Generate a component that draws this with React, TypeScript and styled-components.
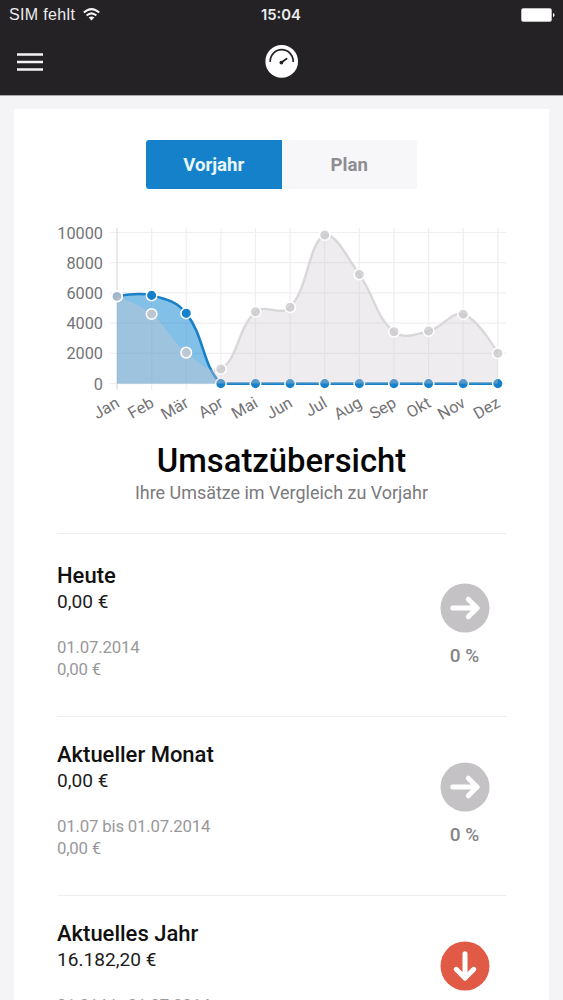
import React from "react";
import styled, { createGlobalStyle } from "styled-components";

const GlobalStyle = createGlobalStyle`
  *, *::before, *::after { box-sizing: border-box; }
  html, body { margin: 0; padding: 0; height: 1000px; overflow: hidden; background: #f4f3f6; }
  body { font-family: Roboto, "Liberation Sans", sans-serif; }
`;

const Screen = styled.div`
  width: 563px;
  height: 1000px;
  overflow: hidden;
  display: flex;
  flex-direction: column;
  background: #f4f3f6;
`;

const Header = styled.header`
  flex: none;
  height: 96px;
  background: #242225;
  border-bottom: 1px solid #a9a8ab;
  color: #fff;
`;

const StatusBar = styled.div`
  height: 29px;
  padding: 0 8px 0 9px;
  display: grid;
  grid-template-columns: 1fr auto 1fr;
  align-items: center;
  font-family: "Liberation Sans", sans-serif;
  font-size: 16px;
  line-height: 29px;
  color: #ececee;
`;

const Carrier = styled.div`
  display: flex;
  align-items: center;
  gap: 8px;
  letter-spacing: 0.35px;
`;

const Clock = styled.div`
  font-family: Inter, sans-serif;
  font-size: 14.8px;
  line-height: 27px;
  padding-top: 2px;
  font-weight: 600;
  margin-right: 2px;
`;

const BatteryIcon = styled.svg`
  justify-self: end;
  display: block;
`;

const NavBar = styled.nav`
  height: 66px;
  padding: 0 17px;
  display: grid;
  grid-template-columns: 1fr auto 1fr;
  align-items: center;
`;

const MenuButton = styled.button`
  width: 26px;
  height: 18px;
  padding: 0;
  border: 0;
  background: none;

  svg { display: block; }
`;

const Card = styled.main`
  flex: none;
  width: 535px;
  height: 960px;
  margin: 13px 14px 0;
  padding: 31px 43px 0;
  background: #fff;
`;

const Tabs = styled.div`
  margin: 0 auto;
  display: flex;
  width: 271px;
  height: 49px;
  border-radius: 3px;
  overflow: hidden;
`;

const Tab = styled.button<{ $active?: boolean }>`
  flex: 1;
  border: 0;
  padding: 2px 0 0;
  font: 700 18.6px/47px Roboto, sans-serif;
  color: ${(p) => (p.$active ? "#e9f7fd" : "#8e8d90")};
  background: ${(p) => (p.$active ? "#1681cb" : "#f7f6f9")};
`;

const ChartSvg = styled.svg`
  display: block;
  width: 449px;
  height: 210px;
  margin-top: 31px;
  overflow: visible;
  font-family: Roboto, sans-serif;
  font-size: 16.3px;
  fill: #747376;
`;

const Title = styled.h1`
  margin: 11px 0 0;
  font-size: 32.8px;
  line-height: 40px;
  font-weight: 500;
  text-align: center;
  color: #060606;
`;

const Subtitle = styled.p`
  margin: 1px 0 0;
  font-size: 17.95px;
  line-height: 22px;
  text-align: center;
  color: #7b7a7d;
`;

const Entries = styled.div`
  margin-top: 29px;
`;

const Entry = styled.section`
  height: 179px;
  border-top: 1px solid #edecee;
  padding-top: 23px;
  display: flex;
  justify-content: space-between;

  &:first-child {
    height: 183px;
    padding-top: 27px;
  }
`;

const EntryName = styled.h2`
  margin: 0 0 -1px;
  font-size: 22px;
  line-height: 29px;
  font-weight: 500;
  color: #111;
`;

const Amount = styled.div`
  font-size: 19.1px;
  line-height: 26px;
  color: #1c1c1c;
`;

const Comparison = styled.div`
  margin-top: 21px;
  font-size: 16.8px;
  line-height: 22px;
  letter-spacing: -0.18px;
  color: #99989b;
`;

const Trend = styled.div`
  width: 83px;
  padding-top: 22px;
  display: flex;
  flex-direction: column;
  align-items: center;
`;

const TrendIcon = styled.svg`
  display: block;
  width: 50px;
  height: 50px;
`;

const Percent = styled.div`
  margin-top: 12px;
  font-size: 19px;
  line-height: 22px;
  font-weight: 500;
  color: #858487;
`;

type Pt = { x: number; y: number };

const MONTHS = ["Jan", "Feb", "Mär", "Apr", "Mai", "Jun", "Jul", "Aug", "Sep", "Okt", "Nov", "Dez"];
const TICKS = [10000, 8000, 6000, 4000, 2000, 0];
const CURRENT = [5800, 5840, 4650, 0, 0, 0, 0, 0, 0, 0, 0, 0];
const PREVIOUS = [5760, 4610, 2050, 970, 4750, 5050, 9830, 7230, 3430, 3480, 4590, 2010];

const LEFT = 60;
const STEP = 34.62;
const TOP = 12.5;
const BOTTOM = 163.6;

const xAt = (i: number) => LEFT + i * STEP;
const yAt = (v: number) => BOTTOM - (v / 10000) * (BOTTOM - TOP);
const clampY = (y: number) => Math.min(BOTTOM, Math.max(TOP, y));

function smoothPath(values: number[]) {
  const pts: Pt[] = values.map((v, i) => ({ x: xAt(i), y: yAt(v) }));
  const controls = pts.map((p, i) => {
    const prev = pts[i - 1];
    const next = pts[i + 1];
    if (!prev || !next) return { before: p, after: p };
    const d0 = Math.hypot(p.x - prev.x, p.y - prev.y);
    const d1 = Math.hypot(next.x - p.x, next.y - p.y);
    const a = (0.4 * d0) / (d0 + d1);
    const b = (0.4 * d1) / (d0 + d1);
    return {
      before: { x: p.x - a * (next.x - prev.x), y: clampY(p.y - a * (next.y - prev.y)) },
      after: { x: p.x + b * (next.x - prev.x), y: clampY(p.y + b * (next.y - prev.y)) },
    };
  });
  return pts
    .map((p, i) => {
      if (i === 0) return `M${p.x} ${p.y}`;
      const c1 = controls[i - 1].after;
      const c2 = controls[i].before;
      return `C${c1.x} ${c1.y} ${c2.x} ${c2.y} ${p.x} ${p.y}`;
    })
    .join(" ");
}

function Area({ values, fill }: { values: number[]; fill: string }) {
  return <path d={`${smoothPath(values)} L${xAt(11)} ${BOTTOM} L${LEFT} ${BOTTOM} Z`} fill={fill} />;
}

function Curve({ values, color, width }: { values: number[]; color: string; width: number }) {
  return <path d={smoothPath(values)} fill="none" stroke={color} strokeWidth={width} />;
}

function Dots({ values, color }: { values: number[]; color: string }) {
  return (
    <>
      {values.map((v, i) => (
        <circle key={i} cx={xAt(i)} cy={yAt(v)} r={5.3} fill={color} stroke="#fff" strokeWidth={1.5} />
      ))}
    </>
  );
}

function RevenueChart() {
  return (
    <ChartSvg viewBox="0 0 449 210">
      <clipPath id="uncovered">
        <rect x={xAt(3) - 7} y="0" width="400" height="210" />
      </clipPath>
      {TICKS.map((t) => (
        <g key={t}>
          <line x1={53} x2={449} y1={yAt(t)} y2={yAt(t)} stroke="#f0eef1" strokeWidth={1.2} />
          <text x={46} y={yAt(t) + 6} textAnchor="end">{t}</text>
        </g>
      ))}
      {MONTHS.map((m, i) => (
        <g key={m}>
          <line x1={xAt(i)} x2={xAt(i)} y1={8} y2={170} stroke={i ? "#f0eef1" : "#dddce0"} strokeWidth={1.2} />
          <text transform={`translate(${xAt(i) + 3.5} 186) rotate(-30)`} textAnchor="end">{m}</text>
        </g>
      ))}
      <g clipPath="url(#uncovered)">
        <Curve values={PREVIOUS} color="#dddbde" width={2.4} />
      </g>
      <Area values={CURRENT} fill="rgba(18,134,210,0.52)" />
      <Curve values={CURRENT} color="#1880c6" width={2.6} />
      <Dots values={CURRENT} color="#1681cb" />
      <Area values={PREVIOUS} fill="rgba(206,200,206,0.35)" />
      <Dots values={PREVIOUS} color="rgba(203,201,205,0.78)" />
    </ChartSvg>
  );
}

function TrendBadge({ down }: { down?: boolean }) {
  return (
    <TrendIcon viewBox="0 0 50 50">
      <circle cx="25" cy="25" r="24.5" fill={down ? "#e05a45" : "#c4c2c5"} />
      <g transform={down ? "rotate(90 25 25)" : undefined} fill="none" stroke="#fff" strokeWidth={5} strokeLinecap="round" strokeLinejoin="round">
        <path d="M12.8 25H37" />
        <path d="M28.3 16.2L37 25L28.3 33.8" />
      </g>
    </TrendIcon>
  );
}

const ENTRIES = [
  { name: "Heute", amount: "0,00 €", period: "01.07.2014", before: "0,00 €", percent: "0 %", down: false },
  { name: "Aktueller Monat", amount: "0,00 €", period: "01.07 bis 01.07.2014", before: "0,00 €", percent: "0 %", down: false },
  { name: "Aktuelles Jahr", amount: "16.182,20 €", period: "01.01 bis 01.07.2014", before: "", percent: "", down: true },
];

export default function App() {
  return (
    <Screen>
      <GlobalStyle />
      <Header>
        <StatusBar>
          <Carrier>
            SIM fehlt
            <svg width="17" height="13" viewBox="0 0 17 13" fill="none" stroke="#f4f4f4" strokeWidth="2">
              <path d="M0.8 4.6Q8.5 -2.4 16.2 4.6" />
              <path d="M3.6 7.6Q8.5 3.2 13.4 7.6" />
              <path d="M8.5 12.4L5.7 9.6Q8.5 7.2 11.3 9.6Z" fill="#f4f4f4" stroke="none" />
            </svg>
          </Carrier>
          <Clock>15:04</Clock>
          <BatteryIcon width="34" height="14" viewBox="0 0 34 14">
            <rect x="0.5" y="0.5" width="30" height="13" rx="1.8" fill="#fff" stroke="#bdbcbe" />
            <path d="M32 5Q33.6 5.4 33.6 7T32 9Z" fill="#fff" />
          </BatteryIcon>
        </StatusBar>
        <NavBar>
          <MenuButton aria-label="Menü">
            <svg width="26" height="18" viewBox="0 0 26 18" stroke="#f4f4f4" strokeWidth="2.5">
              <path d="M0 1.5H26M0 9H26M0 16.5H26" />
            </svg>
          </MenuButton>
          <svg width="34" height="34" viewBox="0 0 34 34">
            <circle cx="16.7" cy="16.4" r="16.3" fill="#fff" />
            <g fill="none" stroke="#242225" strokeLinecap="round">
              <path d="M5.2 16.2A11.5 11.5 0 0 1 28.2 16.2" strokeWidth="1.7" />
              <path d="M16.7 17.3L21.6 13.7" strokeWidth="1.8" />
            </g>
            <circle cx="16.4" cy="17.6" r="1.9" fill="#242225" />
          </svg>
        </NavBar>
      </Header>
      <Card>
        <Tabs>
          <Tab $active>Vorjahr</Tab>
          <Tab>Plan</Tab>
        </Tabs>
        <RevenueChart />
        <Title>Umsatzübersicht</Title>
        <Subtitle>Ihre Umsätze im Vergleich zu Vorjahr</Subtitle>
        <Entries>
          {ENTRIES.map((e) => (
            <Entry key={e.name}>
              <div>
                <EntryName>{e.name}</EntryName>
                <Amount>{e.amount}</Amount>
                <Comparison>
                  <div>{e.period}</div>
                  {e.before}
                </Comparison>
              </div>
              <Trend>
                <TrendBadge down={e.down} />
                <Percent>{e.percent}</Percent>
              </Trend>
            </Entry>
          ))}
        </Entries>
      </Card>
    </Screen>
  );
}
